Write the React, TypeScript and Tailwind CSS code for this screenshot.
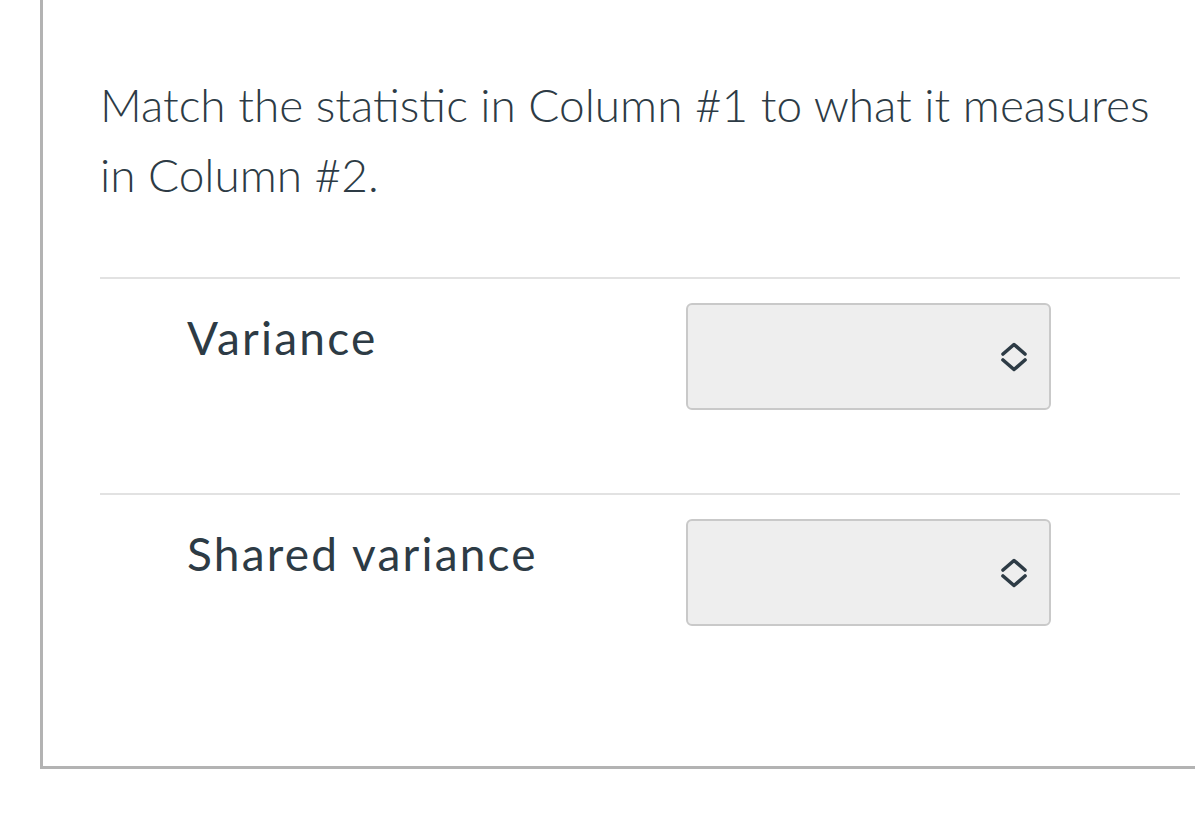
import React from 'react';

const rows = ['Variance', 'Shared variance'];

const Chevrons: React.FC = () => (
    <svg width="28" height="32" viewBox="0 0 28 32" fill="none" stroke="#2d3b45" strokeWidth="3.6" strokeLinecap="round" strokeLinejoin="round">
        <path d="M3 13 L14 3.5 L25 13" />
        <path d="M3 19 L14 28.5 L25 19" />
    </svg>
);

const App: React.FC = () => {
    return (
        <div className="min-h-[824px] bg-white" style={{ fontFamily: 'Lato, "Open Sans", sans-serif' }}>
            <div className="ml-[40px] h-[769px] border-l-[3px] border-b-[3px] border-[#b3b3b3] pl-[57px] pr-[15px] pt-[70px] text-[#2d3b45]">
                <p className="text-[46px] font-light leading-[70px]">
                    Match the statistic in Column #1 to what it measures
                    <br />
                    in Column #2.
                </p>
                <div className="mt-[67px]">
                    {rows.map((label) => (
                        <div key={label} className="flex h-[216px] border-t-2 border-[#e2e2e2] pt-[24px]">
                            <div className="w-[586px] pl-[87px] text-[46px] leading-[70px] tracking-[2.2px]">{label}</div>
                            <div className="flex h-[107px] w-[365px] items-center justify-end rounded-[6px] border-[2.5px] border-[#c9c9c9] bg-[#eeeeee] pr-[21px]">
                                <Chevrons />
                            </div>
                        </div>
                    ))}
                </div>
            </div>
        </div>
    );
};

export default App;
